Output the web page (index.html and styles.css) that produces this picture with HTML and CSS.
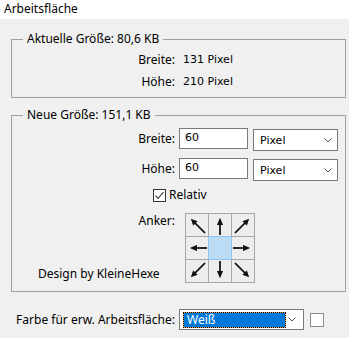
FILE: index.html
```html
<!DOCTYPE html>
<html>
<head>
  <title>Arbeitsfläche</title>
  <link rel="stylesheet" href="styles.css">
</head>
<body>
  <div class="titlebar">Arbeitsfläche</div>

  <fieldset class="group group-current">
    <legend>Aktuelle Größe: 80,6 KB</legend>
    <div class="info-grid">
      <span class="label">Breite:</span><span class="value">131 Pixel</span>
      <span class="label">Höhe:</span><span class="value">210 Pixel</span>
    </div>
  </fieldset>

  <fieldset class="group group-new">
    <legend>Neue Größe: 151,1 KB</legend>
    <div class="size-grid">
      <span class="label">Breite:</span>
      <div class="text-input">60</div>
      <div class="dropdown unit-select">
        <span>Pixel</span>
        <svg class="chevron" width="8" height="5" viewBox="0 0 8 5"><polyline points="0.5,0.5 4,4 7.5,0.5" fill="none" stroke="#555" stroke-width="1"/></svg>
      </div>
      <span class="label">Höhe:</span>
      <div class="text-input">60</div>
      <div class="dropdown unit-select">
        <span>Pixel</span>
        <svg class="chevron" width="8" height="5" viewBox="0 0 8 5"><polyline points="0.5,0.5 4,4 7.5,0.5" fill="none" stroke="#555" stroke-width="1"/></svg>
      </div>
    </div>

    <div class="relativ-row">
      <span class="checkbox">
        <svg width="11" height="11" viewBox="0 0 11 11"><polyline points="1.5,5.5 4,8.5 9.5,2" fill="none" stroke="#222" stroke-width="1.1"/></svg>
      </span>
      <span>Relativ</span>
    </div>

    <div class="anchor-row">
      <div class="anchor-side">
        <span class="label anchor-label">Anker:</span>
        <span class="credit">Design by KleineHexe</span>
      </div>
      <div class="anchor-grid">
        <div class="cell"><svg width="22" height="22" viewBox="0 0 22 22"><g transform="rotate(0 11 11)"><path d="M19 19L9 9" stroke="#111" stroke-width="1.6"/><path d="M5 5L11.5 7.2L7.2 11.5Z" fill="#111"/></g></svg></div>
        <div class="cell"><svg width="22" height="22" viewBox="0 0 22 22"><g transform="rotate(0 11 11)"><path d="M11 21V9" stroke="#111" stroke-width="1.6"/><path d="M11 4L8 11H14Z" fill="#111"/></g></svg></div>
        <div class="cell"><svg width="22" height="22" viewBox="0 0 22 22"><g transform="rotate(90 11 11)"><path d="M19 19L9 9" stroke="#111" stroke-width="1.6"/><path d="M5 5L11.5 7.2L7.2 11.5Z" fill="#111"/></g></svg></div>
        <div class="cell"><svg width="22" height="22" viewBox="0 0 22 22"><g transform="rotate(270 11 11)"><path d="M11 21V9" stroke="#111" stroke-width="1.6"/><path d="M11 4L8 11H14Z" fill="#111"/></g></svg></div>
        <div class="cell cell-active"></div>
        <div class="cell"><svg width="22" height="22" viewBox="0 0 22 22"><g transform="rotate(90 11 11)"><path d="M11 21V9" stroke="#111" stroke-width="1.6"/><path d="M11 4L8 11H14Z" fill="#111"/></g></svg></div>
        <div class="cell"><svg width="22" height="22" viewBox="0 0 22 22"><g transform="rotate(270 11 11)"><path d="M19 19L9 9" stroke="#111" stroke-width="1.6"/><path d="M5 5L11.5 7.2L7.2 11.5Z" fill="#111"/></g></svg></div>
        <div class="cell"><svg width="22" height="22" viewBox="0 0 22 22"><g transform="rotate(180 11 11)"><path d="M11 21V9" stroke="#111" stroke-width="1.6"/><path d="M11 4L8 11H14Z" fill="#111"/></g></svg></div>
        <div class="cell"><svg width="22" height="22" viewBox="0 0 22 22"><g transform="rotate(180 11 11)"><path d="M19 19L9 9" stroke="#111" stroke-width="1.6"/><path d="M5 5L11.5 7.2L7.2 11.5Z" fill="#111"/></g></svg></div>
      </div>
    </div>
  </fieldset>

  <div class="color-row">
    <span class="label color-label">Farbe für erw. Arbeitsfläche:</span>
    <div class="dropdown color-select">
      <span class="selected-value">Weiß</span>
      <svg class="chevron" width="8" height="5" viewBox="0 0 8 5"><polyline points="0.5,0.5 4,4 7.5,0.5" fill="none" stroke="#555" stroke-width="1"/></svg>
    </div>
    <span class="swatch"></span>
  </div>
</body>
</html>
```

FILE: styles.css
```css
body {
  margin: 0;
  background-color: #f0f0f0;
  font-family: 'Noto Sans', sans-serif;
  font-size: 12px;
  line-height: 16px;
  color: #000;
}
.titlebar {
  background: #fff;
  height: 19px;
  line-height: 17px;
  padding-left: 4px;
}
.group {
  margin: 0 3px 0 11px;
  padding: 0;
  border: 1px solid #a0a0a0;
  min-inline-size: 0;
}
.group legend {
  margin-left: 11px;
  padding: 0 4px;
  line-height: 16px;
}
.group-current {
  margin-top: 12px;
}
.group-new {
  margin-top: 9px;
  padding-bottom: 8px;
}
.label {
  text-align: right;
}
.info-grid {
  display: grid;
  grid-template-columns: 163px auto;
  column-gap: 8px;
  row-gap: 6px;
  padding: 5px 0 7px;
}
.value {
  font-family: 'DejaVu Sans', sans-serif;
  font-size: 11px;
}
.size-grid {
  display: grid;
  grid-template-columns: 163px 69px 86px;
  grid-auto-rows: 23px;
  column-gap: 4px;
  row-gap: 7px;
  padding-top: 5px;
  align-items: start;
}
.size-grid .label {
  line-height: 21px;
}
.text-input {
  box-sizing: border-box;
  height: 21px;
  border: 1px solid #7a7a7a;
  background: #fff;
  padding: 0 5px;
  font-family: 'DejaVu Sans', sans-serif;
  font-size: 11px;
  line-height: 18px;
}
.dropdown {
  box-sizing: border-box;
  display: flex;
  align-items: center;
  justify-content: space-between;
  border: 1px solid #7a7a7a;
  background: #fff;
  font-family: 'DejaVu Sans', sans-serif;
  font-size: 11px;
}
.unit-select {
  height: 22px;
  margin: 1px 0 0 1px;
  padding: 1px 5px 0 6px;
}
.relativ-row {
  display: flex;
  align-items: center;
  gap: 3px;
  margin-top: 6px;
  padding-left: 141px;
}
.checkbox {
  box-sizing: border-box;
  width: 13px;
  height: 13px;
  border: 1px solid #333;
  background: #fff;
  display: flex;
}
.anchor-row {
  display: flex;
  margin-top: 10px;
}
.anchor-side {
  width: 163px;
  display: flex;
  flex-direction: column;
}
.anchor-label {
  align-self: flex-end;
}
.credit {
  margin-top: auto;
  margin-bottom: 1px;
  padding-left: 26px;
}
.anchor-grid {
  margin-left: 10px;
  display: grid;
  grid-template-columns: repeat(3, 22px);
  grid-template-rows: repeat(3, 22px);
  gap: 1px;
  padding: 1px;
  background: #a8a8a8;
}
.cell {
  background: #ededed;
  display: flex;
}
.cell svg {
  filter: drop-shadow(0 0 0.6px rgba(0, 0, 0, 0.5));
}
.cell-active {
  background: #bcdcf5;
  outline: 1px solid #8fc3ee;
}
.color-row {
  display: flex;
  align-items: flex-start;
  margin-top: 17px;
}
.color-label {
  width: 175px;
  line-height: 21px;
}
.color-select {
  width: 125px;
  height: 21px;
  margin-left: 4px;
  padding: 0 7px 0 3px;
}
.selected-value {
  box-sizing: border-box;
  width: 103px;
  height: 16px;
  padding-left: 4px;
  line-height: 15px;
  background: #0078d7;
  color: #fff;
  font-family: 'Noto Sans', sans-serif;
  font-size: 12px;
  outline: 1px dotted #000;
  outline-offset: -1px;
  box-shadow: inset 0 0 0 1px #e8a040;
}
.swatch {
  box-sizing: border-box;
  width: 14px;
  height: 14px;
  margin: 4px 0 0 6px;
  border: 1px solid #8a8a8a;
  background: #fff;
}
```
